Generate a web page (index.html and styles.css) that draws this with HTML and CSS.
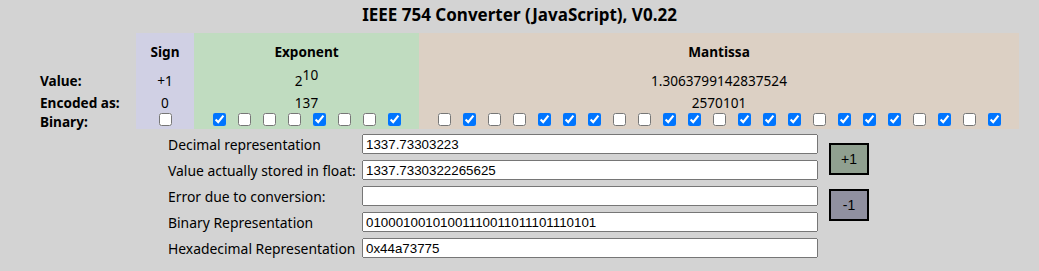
FILE: index.html
```html
<!DOCTYPE html>
<html lang="en">

<head>
    <meta charset="UTF-8">
    <title>IEEE 754 Converter</title>
    <link rel="stylesheet" href="styles.css">
</head>

<body>
    <h3 class="title">IEEE 754 Converter (JavaScript), V0.22</h3>

    <div class="bits">
        <div class="col labels">
            <div class="cell head"></div>
            <div class="cell">Value:</div>
            <div class="cell">Encoded as:</div>
            <div class="cell bin">Binary:</div>
        </div>

        <div class="col sign">
            <div class="cell head">Sign</div>
            <div class="cell">+1</div>
            <div class="cell">0</div>
            <div class="cell bin boxes">
                <input type="checkbox">
            </div>
        </div>

        <div class="col exponent">
            <div class="cell head">Exponent</div>
            <div class="cell">2<span class="pow">10</span></div>
            <div class="cell">137</div>
            <div class="cell bin boxes">
                <input type="checkbox" checked>
                <input type="checkbox">
                <input type="checkbox">
                <input type="checkbox">
                <input type="checkbox" checked>
                <input type="checkbox">
                <input type="checkbox">
                <input type="checkbox" checked>
            </div>
        </div>

        <div class="col mantissa">
            <div class="cell head">Mantissa</div>
            <div class="cell">1.3063799142837524</div>
            <div class="cell">2570101</div>
            <div class="cell bin boxes">
                <input type="checkbox">
                <input type="checkbox" checked>
                <input type="checkbox">
                <input type="checkbox">
                <input type="checkbox" checked>
                <input type="checkbox" checked>
                <input type="checkbox" checked>
                <input type="checkbox">
                <input type="checkbox">
                <input type="checkbox" checked>
                <input type="checkbox" checked>
                <input type="checkbox">
                <input type="checkbox" checked>
                <input type="checkbox" checked>
                <input type="checkbox" checked>
                <input type="checkbox">
                <input type="checkbox" checked>
                <input type="checkbox" checked>
                <input type="checkbox" checked>
                <input type="checkbox">
                <input type="checkbox" checked>
                <input type="checkbox">
                <input type="checkbox" checked>
            </div>
        </div>
    </div>

    <div class="form">
        <div class="fields">
            <div class="row">
                <label for="decimal">Decimal representation</label>
                <input type="text" id="decimal" value="1337.73303223">
            </div>
            <div class="row">
                <label for="stored">Value actually stored in float:</label>
                <input type="text" id="stored" value="1337.7330322265625">
            </div>
            <div class="row">
                <label for="error">Error due to conversion:</label>
                <input type="text" id="error" value="">
            </div>
            <div class="row">
                <label for="binary">Binary Representation</label>
                <input type="text" id="binary" value="01000100101001110011011101110101">
            </div>
            <div class="row">
                <label for="hex">Hexadecimal Representation</label>
                <input type="text" id="hex" value="0x44a73775">
            </div>
        </div>

        <div class="buttons">
            <button type="button" class="inc">+1</button>
            <button type="button" class="dec">-1</button>
        </div>
    </div>
</body>

</html>
```

FILE: styles.css
```css
* {
    box-sizing: border-box;
}

body {
    margin: 8px;
    background-color: #d3d3d3;
    font-family: "Noto Sans", sans-serif;
    color: #000;
}

.title {
    margin: 0 0 11px 0;
    font-size: 17px;
    line-height: 14px;
    text-align: center;
}

.bits {
    display: flex;
    margin: 0 12px;
    font-size: 13.6px;
}

.col {
    display: flex;
    flex-direction: column;
}

.cell {
    height: 22px;
    display: flex;
    align-items: center;
    justify-content: center;
}

.cell.head {
    height: 36px;
    font-weight: bold;
}

.cell.bin {
    height: 16px;
}

.labels {
    width: 116px;
    padding-left: 20px;
    font-weight: bold;
}

.labels .cell {
    justify-content: flex-start;
}

.sign {
    width: 58px;
    background-color: #d0d0e4;
}

.exponent {
    width: 225px;
    background-color: #c0dcc0;
}

.mantissa {
    width: 600px;
    background-color: #dcd0c4;
}

.boxes {
    align-items: flex-start;
    gap: 12px;
}

.boxes input {
    margin: 0;
    width: 13px;
    height: 13px;
}

.pow {
    position: relative;
    top: -6px;
}

.form {
    display: flex;
    margin: 5px 0 0 160px;
    font-size: 13.9px;
}

.row {
    display: flex;
    align-items: center;
    height: 20px;
    margin-bottom: 6px;
}

.row label {
    width: 194px;
    white-space: nowrap;
}

.row input {
    width: 456px;
    height: 20px;
    font-family: "Liberation Sans", Arial, sans-serif;
    font-size: 13.33px;
}

.buttons {
    display: flex;
    flex-direction: column;
    gap: 14px;
    margin-left: 11px;
    padding-top: 9px;
}

.buttons button {
    width: 40px;
    height: 32px;
    border: 2px solid #000;
    font-family: "Liberation Sans", Arial, sans-serif;
    font-size: 14px;
    color: #000;
}

.inc {
    background-color: #90a090;
}

.dec {
    background-color: #9090a0;
}
```
